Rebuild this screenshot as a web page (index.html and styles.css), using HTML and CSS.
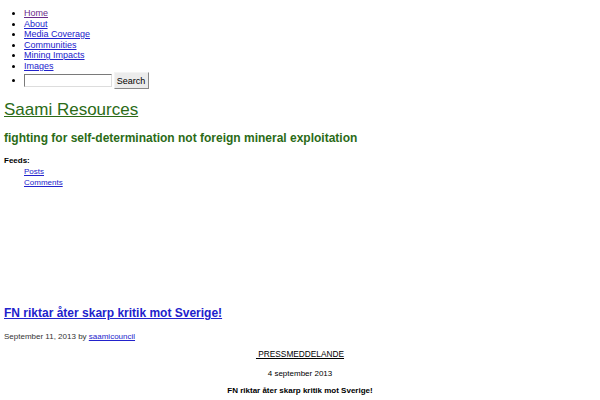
FILE: index.html
```html
<!DOCTYPE html>
<html>
<head>
<meta charset="utf-8">
<link rel="stylesheet" href="styles.css">
</head>
<body>
<ul class="menu">
  <li><a class="visited" href="#">Home</a></li>
  <li><a href="#">About</a></li>
  <li><a href="#">Media Coverage</a></li>
  <li><a href="#">Communities</a></li>
  <li><a href="#">Mining Impacts</a></li>
  <li><a href="#">Images</a></li>
  <li class="search-row"><input class="search-input" type="text"> <button class="search-btn">Search</button></li>
</ul>
<h1 class="site-title"><a href="#">Saami Resources</a></h1>
<h2 class="tagline">fighting for self-determination not foreign mineral exploitation</h2>
<dl class="feeds">
  <dt>Feeds:</dt>
  <dd><a href="#">Posts</a></dd>
  <dd><a href="#">Comments</a></dd>
</dl>
<div class="spacer"></div>
<h2 class="post-title"><a href="#">FN riktar åter skarp kritik mot Sverige!</a></h2>
<p class="meta">September 11, 2013 by <a href="#">saamicouncil</a></p>
<div class="content">
  <p class="press"><u>&nbsp;PRESSMEDDELANDE</u></p>
  <p class="pdate">4 september 2013</p>
  <p class="ptitle">FN riktar åter skarp kritik mot Sverige!</p>
</div>
</body>
</html>
```
FILE: styles.css
```css
body {
  margin: 0;
  padding: 8px 4px 0;
  font-family: "Liberation Sans", Arial, sans-serif;
  font-size: 9px;
  color: #000;
  background: #fff;
}
a { color: #2222cc; }
a.visited { color: #6b2a8a; }
.menu {
  margin: 0;
  padding-left: 20px;
  list-style: disc;
  line-height: 10.5px;
}
.search-row {
  line-height: 18px;
  height: 18px;
}
.search-input {
  box-sizing: border-box;
  width: 88px;
  height: 13px;
  border: 1px solid #7a7a7a;
  border-right-color: #ddd;
  border-bottom-color: #ddd;
  padding: 0;
  margin: 0;
  vertical-align: middle;
}
.search-btn {
  box-sizing: border-box;
  font-family: "Liberation Sans", Arial, sans-serif;
  font-size: 9px;
  height: 17px;
  width: 35px;
  padding: 0;
  margin: 0 0 0 -1px;
  background: #ececec;
  border: 1px solid #888;
  border-top-color: #f4f4f4;
  border-left-color: #f4f4f4;
  color: #000;
  vertical-align: middle;
}
.site-title {
  margin: 11px 0 0;
  font-size: 17px;
  font-weight: normal;
  line-height: 20px;
}
.site-title a { color: #2b6b17; }
.tagline {
  margin: 10px 0 0;
  font-size: 12px;
  font-weight: bold;
  color: #2b6b17;
  line-height: 16px;
}
.feeds {
  margin: 9px 0 0;
  line-height: 11px;
}
.feeds dt { font-weight: bold; font-size: 8px; }
.feeds dd { margin-left: 20px; font-size: 8px; }
.spacer { height: 117px; }
.post-title {
  margin: 0;
  font-size: 12px;
  font-weight: bold;
  line-height: 16px;
}
.post-title a { color: #2222cc; }
.meta {
  margin: 11px 0 0;
  font-size: 8px;
  color: #333;
}
.content {
  text-align: center;
  font-size: 8px;
}
.press { margin: 8px 0 0; font-size: 8.3px; }
.pdate { margin: 10px 0 0; }
.ptitle { margin: 8px 0 0; font-weight: bold; }
```
